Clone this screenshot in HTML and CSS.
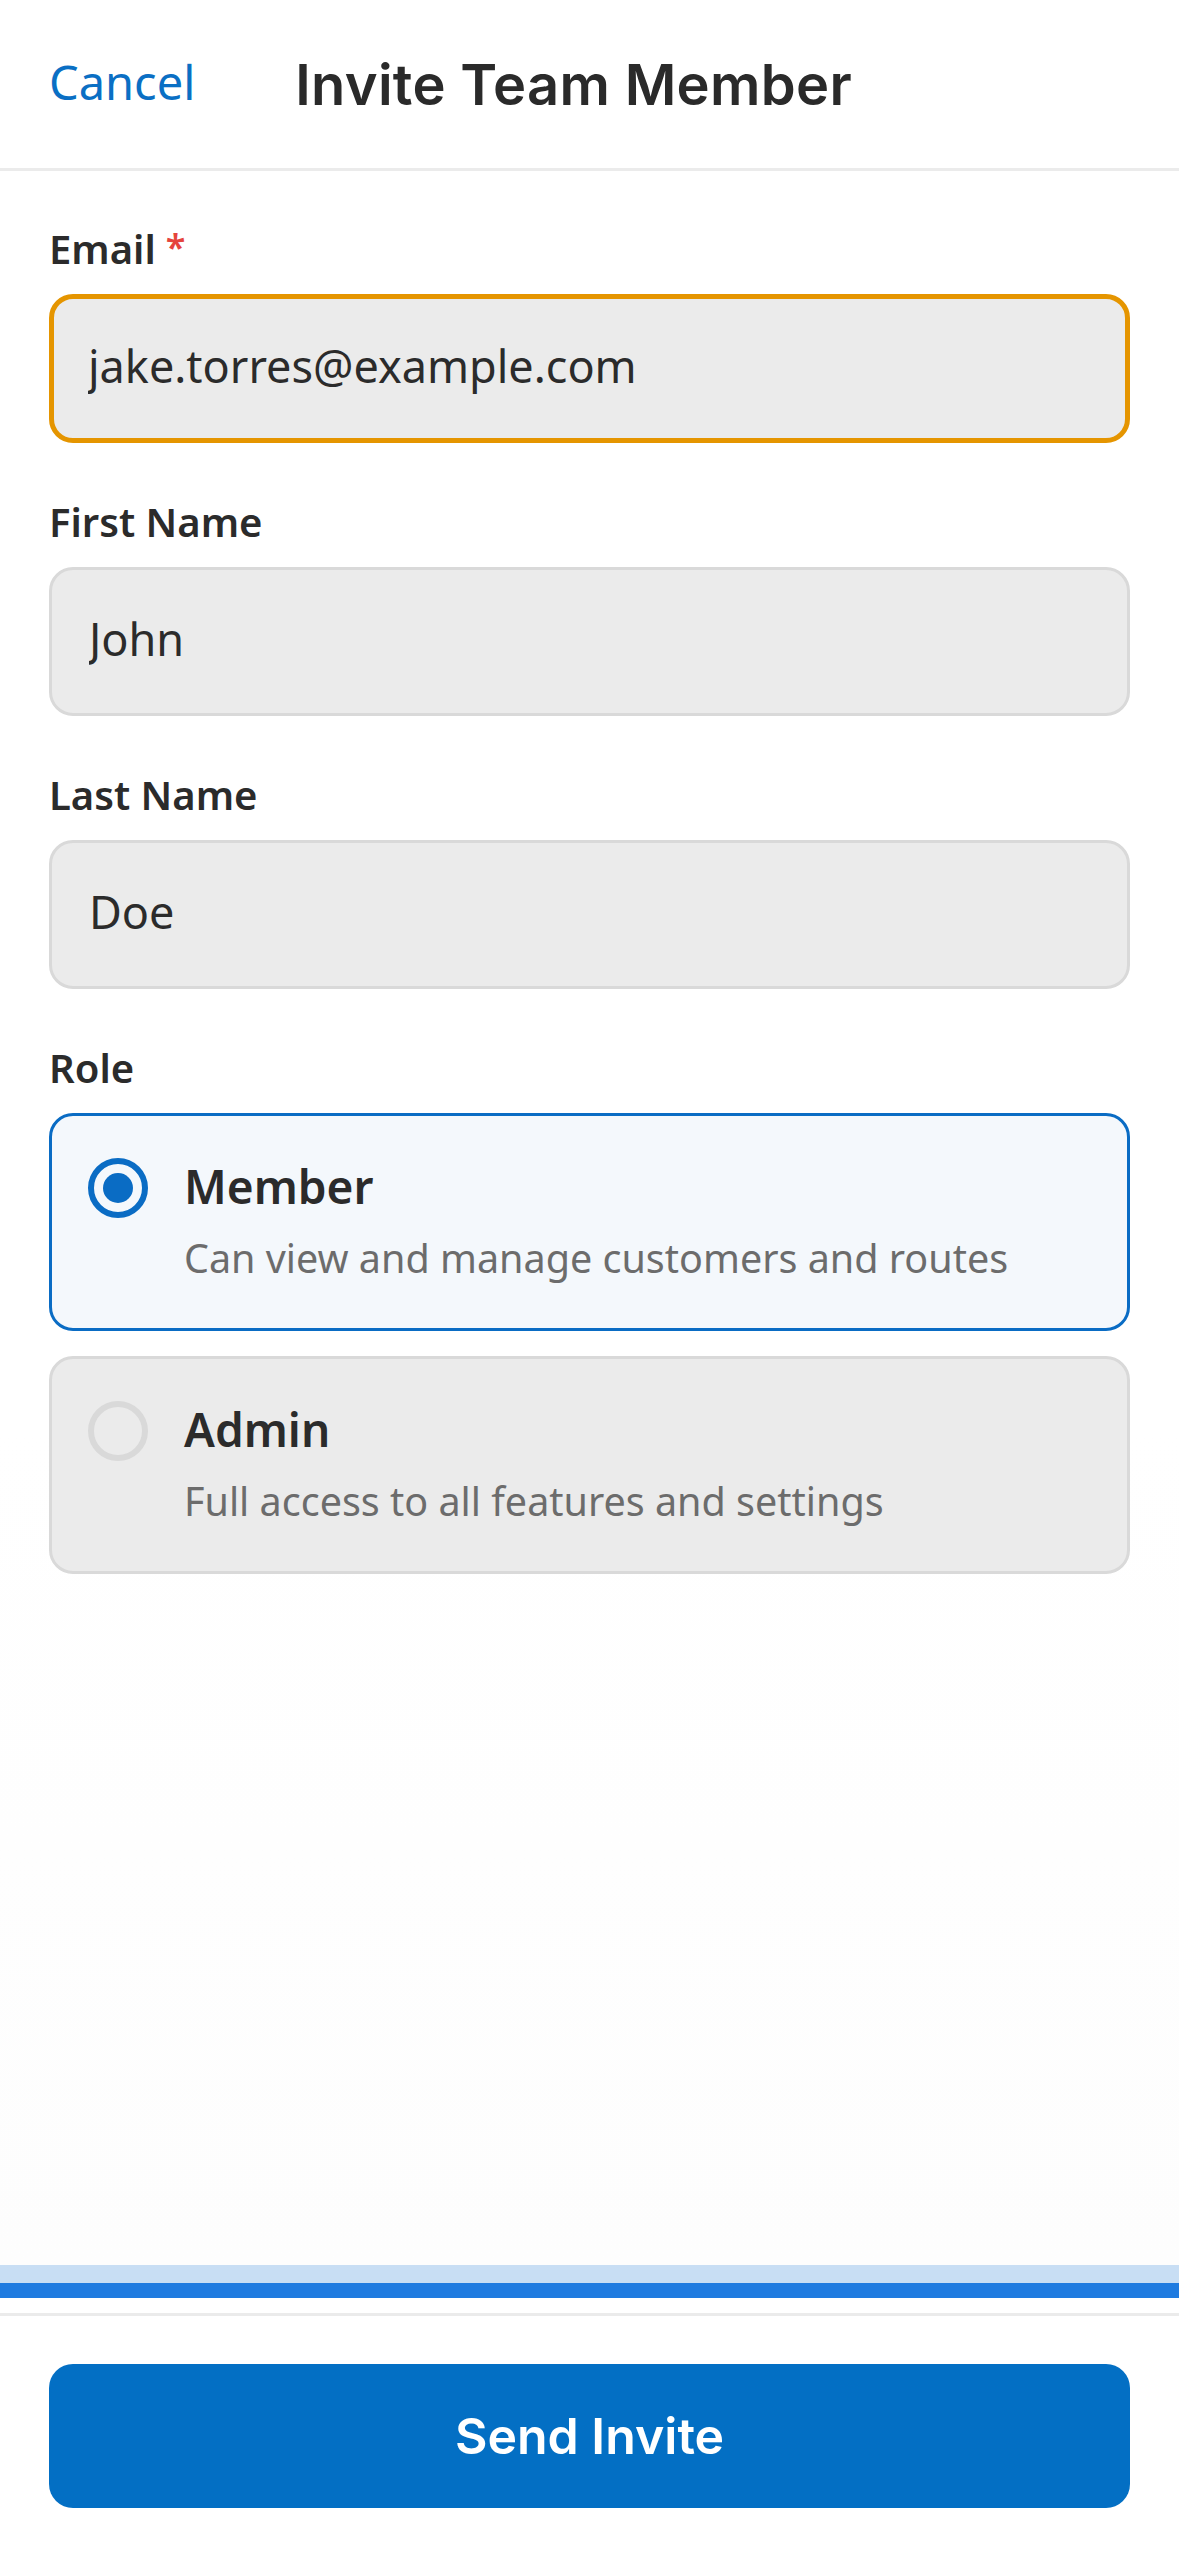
FILE: index.html
```html
<!DOCTYPE html>
<html lang="en">
<head>
<meta charset="utf-8">
<title>Invite Team Member</title>
<link rel="stylesheet" href="styles.css">
</head>
<body>
<div class="screen">
  <header class="topbar">
    <a class="cancel" href="#">Cancel</a>
    <h1 class="title">Invite Team Member</h1>
  </header>

  <main class="form">
    <div class="field">
      <label class="label" for="email">Email<span class="req">*</span></label>
      <input class="input input-focus" id="email" type="text" value="jake.torres@example.com">
    </div>
    <div class="field">
      <label class="label" for="first">First Name</label>
      <input class="input" id="first" type="text" value="John">
    </div>
    <div class="field">
      <label class="label" for="last">Last Name</label>
      <input class="input" id="last" type="text" value="Doe">
    </div>
    <div class="field">
      <div class="label">Role</div>
      <div class="options">
        <div class="option option-selected">
          <span class="radio radio-on"><span class="dot"></span></span>
          <div class="option-text">
            <div class="option-title">Member</div>
            <div class="option-desc">Can view and manage customers and routes</div>
          </div>
        </div>
        <div class="option">
          <span class="radio"></span>
          <div class="option-text">
            <div class="option-title">Admin</div>
            <div class="option-desc">Full access to all features and settings</div>
          </div>
        </div>
      </div>
    </div>
  </main>

  <footer class="footer">
    <div class="progress">
      <div class="progress-track"></div>
      <div class="progress-fill"></div>
    </div>
    <div class="actions">
      <button class="primary" type="button">Send Invite</button>
    </div>
  </footer>
</div>
</body>
</html>
```

FILE: styles.css
```css
* {
  box-sizing: border-box;
}

html, body {
  margin: 0;
  padding: 0;
  background: #ffffff;
}

body {
  font-family: "Noto Sans", "Liberation Sans", sans-serif;
  color: #2b2b2b;
}

.screen {
  min-height: 2556px;
  display: flex;
  flex-direction: column;
}

/* Header */
.topbar {
  height: 171px;
  display: flex;
  align-items: center;
  padding: 0 49px 3px;
  border-bottom: 3px solid #ebebeb;
}

.cancel {
  font-size: 47px;
  color: #0a6fc4;
  text-decoration: none;
  line-height: 1;
}

.title {
  margin: 4px 0 0 100px;
  font-family: Inter, "Noto Sans", sans-serif;
  font-size: 56px;
  font-weight: 600;
  letter-spacing: 0.3px;
  color: #2a2a2a;
  line-height: 1;
}

/* Form */
.form {
  flex: 1;
  padding: 50px 49px 0;
  display: flex;
  flex-direction: column;
  gap: 53px;
  background: linear-gradient(#ffffff 60%, #fdfdfd);
}

.field {
  display: flex;
  flex-direction: column;
  gap: 19px;
}

.label {
  font-size: 40px;
  font-weight: 600;
  line-height: 52px;
  color: #2b2b2b;
}

.req {
  color: #e5443c;
  margin-left: 10px;
  font-size: 36px;
  vertical-align: 4px;
}

.input {
  height: 149px;
  width: 100%;
  margin: 0;
  padding: 0 0 6px 37px;
  background: #ebebeb;
  border: 3px solid #d9d9d9;
  border-radius: 24px;
  font-family: "Noto Sans", sans-serif;
  font-size: 45px;
  color: #2b2b2b;
  outline: none;
}

.input-focus {
  border: 5px solid #e59500;
  padding-left: 34px;
}

/* Role options */
.options {
  display: flex;
  flex-direction: column;
  gap: 25px;
}

.option {
  display: grid;
  grid-template-columns: 60px 1fr;
  column-gap: 36px;
  padding: 42px 36px 44px;
  background: #ebebeb;
  border: 3px solid #d9d9d9;
  border-radius: 24px;
}

.option-selected {
  background: #f4f8fc;
  border-color: #0a6cc4;
}

.radio {
  width: 60px;
  height: 60px;
  border-radius: 50%;
  border: 6px solid #d9d9d9;
  display: flex;
  align-items: center;
  justify-content: center;
}

.radio-on {
  border-color: #0a6cc4;
}

.dot {
  width: 30px;
  height: 30px;
  border-radius: 50%;
  background: #0a6cc4;
}

.option-title {
  font-size: 46px;
  font-weight: 600;
  line-height: 56px;
  color: #2b2b2b;
}

.option-desc {
  margin-top: 18px;
  font-size: 39.5px;
  line-height: 52px;
  color: #6c6c6c;
}

/* Footer */
.footer {
  display: flex;
  flex-direction: column;
}

.progress {
  padding-bottom: 15px;
  background: #ffffff;
}

.progress-track {
  height: 18px;
  background: #c8def4;
}

.progress-fill {
  height: 15px;
  background: #1f7be0;
}

.actions {
  border-top: 3px solid #ebebeb;
  padding: 48px 49px;
  background: #ffffff;
}

.primary {
  display: block;
  width: 100%;
  height: 144px;
  margin: 0;
  border: none;
  border-radius: 24px;
  background: #036fc4;
  color: #ffffff;
  font-family: Inter, "Noto Sans", sans-serif;
  font-size: 50px;
  font-weight: 600;
}
```
